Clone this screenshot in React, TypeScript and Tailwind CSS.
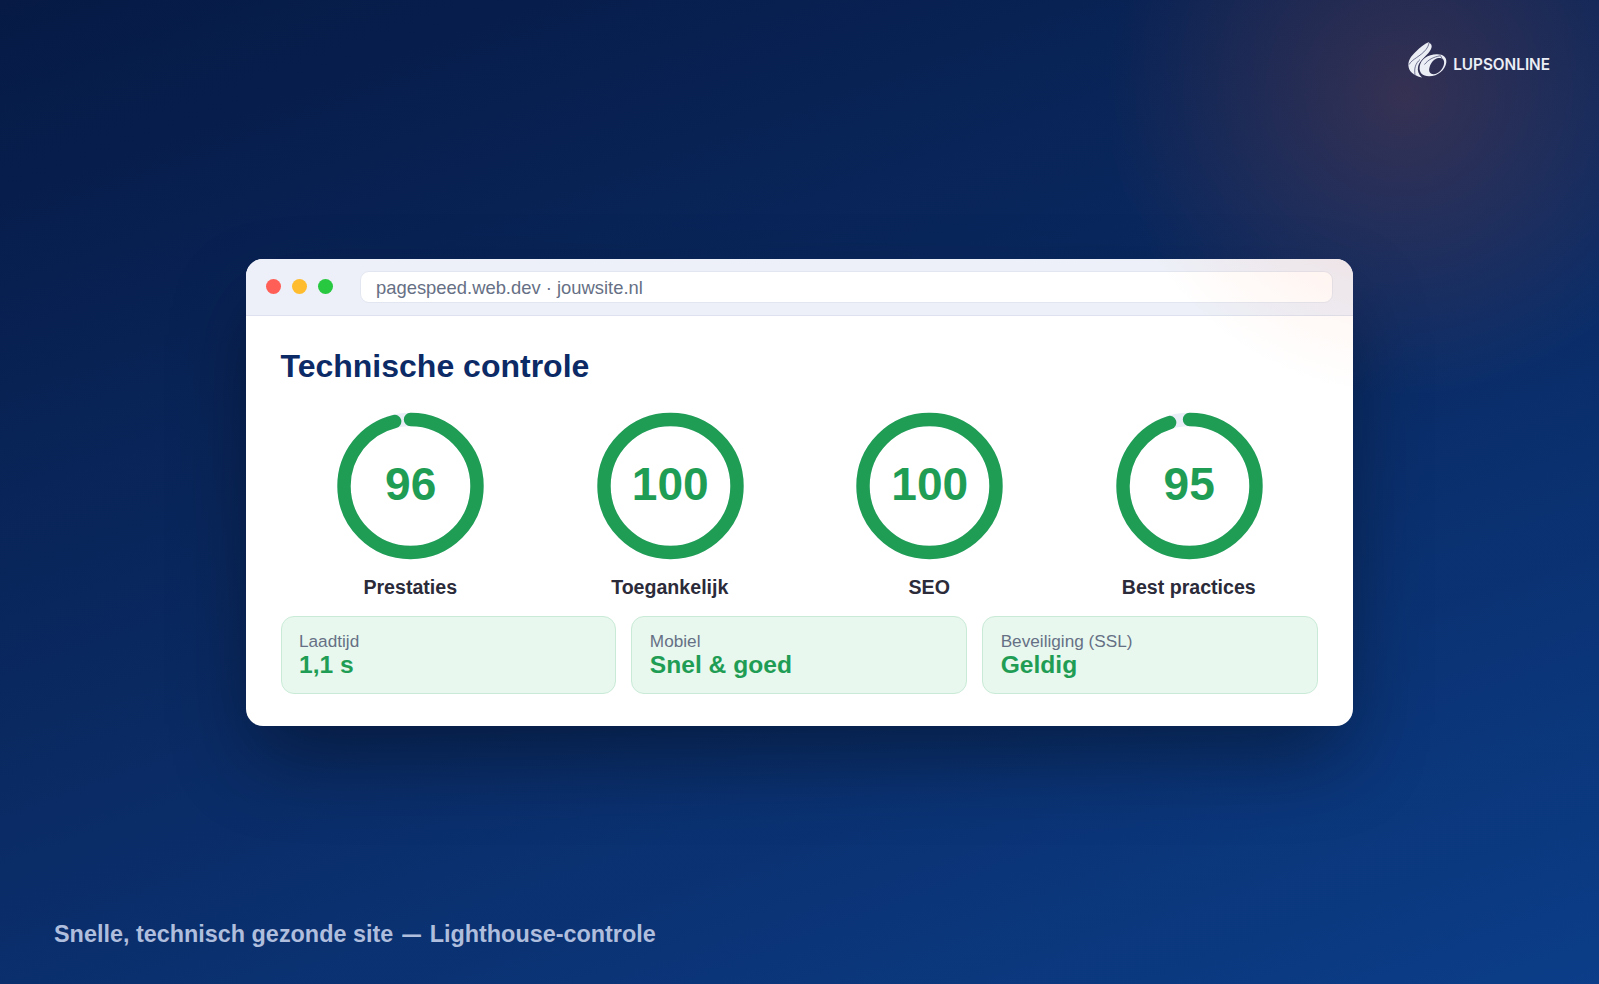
import React from "react";

const scores = [
  { label: "Prestaties", value: 96 },
  { label: "Toegankelijk", value: 100 },
  { label: "SEO", value: 100 },
  { label: "Best practices", value: 95 },
];

const facts = [
  { label: "Laadtijd", value: "1,1 s" },
  { label: "Mobiel", value: "Snel & goed" },
  { label: "Beveiliging (SSL)", value: "Geldig" },
];

function Gauge({ label, value }: { label: string; value: number }) {
  const circumference = 2 * Math.PI * 66.5;
  return (
    <div className="flex flex-col items-center">
      <div className="grid h-[146px] w-[146px] place-items-center">
        <svg viewBox="0 0 146 146" className="col-start-1 row-start-1 h-[146px] w-[146px] -rotate-90 overflow-visible" fill="none">
          <circle cx="73" cy="73.5" r="66.5" stroke="#e9eef7" strokeWidth="13.400" />
          <circle
            cx="73"
            cy="73.5"
            r="66.5"
            stroke="#1f9d55"
            strokeWidth="13.400"
            strokeLinecap="round"
            strokeDasharray={`${(circumference * value) / 100} ${circumference}`}
          />
        </svg>
        <span className="col-start-1 row-start-1 pb-[3px] pl-px text-[46.100px] leading-none font-bold text-[#1f9d55]">{value}</span>
      </div>
      <span className="mt-[17px] text-[19.600px] leading-[23px] font-bold text-[#2b2b3a]">{label}</span>
    </div>
  );
}

function Logo() {
  return (
    <div className="flex items-start gap-[6px] text-[#eceef6]">
      <svg viewBox="0 0 39 36" className="h-9 w-[39px]" fill="none">
        <path
          d="M20.500 .3C16.500 2 12 5.500 8 9.500C3 14 .2 18.500 .4 23.500C.7 29 5 33.500 14 35.600C10.300 32 9.300 28.500 10 25C11 20 15 16.500 19 12.500C23 8.500 26.500 3 20.500 .3Z"
          fill="currentColor"
        />
        <path
          fillRule="evenodd"
          d="M29 12.300C19.500 12.300 12.800 17.500 11.700 24.500C10.800 30.500 14.500 34.300 21 34.300C30 34.300 37.500 27.500 38.300 20.500C38.900 15.500 35.500 12.300 29 12.300ZM30.500 16C34.800 15.700 36.700 18 36 22C35 27.200 30.500 32.200 25.500 32.200C21.500 32.200 20.300 28.800 21.700 24.800C23.300 20 26.500 16.500 30.500 16Z"
          fill="currentColor"
        />
        <path d="M1.200 22.500C4 17 12.500 14.500 18 7.500C19.500 5.500 20.500 3.500 21 1M7 32.800C6 26 7.500 21.500 12 17.500" stroke="#2a3058" strokeWidth=".65" />
        <path d="M16.500 22.500C20 18 25 15 32.500 13.700L34.500 17.500" stroke="#2a3058" strokeWidth=".65" />
      </svg>
      <span className="pt-[15px] font-['Inter'] text-[15.300px] leading-[15px] font-semibold">LUPSONLINE</span>
    </div>
  );
}

export default function App() {
  return (
    <main className="relative flex h-[984px] w-full flex-col overflow-hidden bg-[linear-gradient(160deg,#061a45_0%,#0a2a63_50%,#0b3d88_100%)] font-['Liberation_Sans',sans-serif]">
      <header className="relative z-10 flex h-[259px] shrink-0 items-start justify-end pt-[42px] pr-[49px]">
        <Logo />
      </header>

      <section className="mx-auto h-[467px] w-[1107px] shrink-0 overflow-hidden rounded-[17px] bg-white shadow-[0_37px_83px_-10px_rgba(0,0,0,0.4)]">
        <div className="flex h-[57px] items-center border-b border-[#dde2ee] bg-[#edf0f8] pr-5 pl-[19.500px]">
          <div className="flex gap-[11px] pb-px">
            <span className="h-[15px] w-[15px] rounded-full bg-[#ff5f57]" />
            <span className="h-[15px] w-[15px] rounded-full bg-[#febc2e]" />
            <span className="h-[15px] w-[15px] rounded-full bg-[#28c840]" />
          </div>
          <div className="ml-[27.500px] flex h-8 flex-1 items-center rounded-[9px] border border-[#e2e6f0] bg-white px-[15px] pt-[2px] text-[18.400px] leading-none text-[#667085]">
            pagespeed.web.dev · jouwsite.nl
          </div>
        </div>

        <div className="px-[34.500px] pt-[31px]">
          <h1 className="text-[32px] leading-[38px] font-bold text-[#0b2a66]">Technische controle</h1>
          <div className="mt-[28px] grid grid-cols-4">
            {scores.map((s) => (
              <Gauge key={s.label} {...s} />
            ))}
          </div>
          <div className="mt-[17px] grid grid-cols-3 gap-[15px] pr-[0.500px]">
            {facts.map((f) => (
              <div key={f.label} className="flex h-[78px] flex-col rounded-[13px] border border-[#c9ead6] bg-[#e8f8ee] px-[17.500px] pt-[14px]">
                <span className="text-[17.200px] leading-[21px] text-[#667085]">{f.label}</span>
                <span className="text-[24.600px] leading-[25px] font-bold text-[#1f9d55]">{f.value}</span>
              </div>
            ))}
          </div>
        </div>
      </section>

      <footer className="mt-auto pb-[36px] pl-[54px] text-[23.400px] leading-[28px] font-bold text-[#b0bedd]">
        Snelle, technisch gezonde site <span className="inline-block scale-x-[0.8]">—</span> Lighthouse-controle
      </footer>

      <div className="pointer-events-none absolute top-[-203px] right-[-106px] h-[600px] w-[600px] rounded-full bg-[radial-gradient(circle_closest-side,rgba(255,98,40,0.18),rgba(255,98,40,0))]" />
    </main>
  );
}
